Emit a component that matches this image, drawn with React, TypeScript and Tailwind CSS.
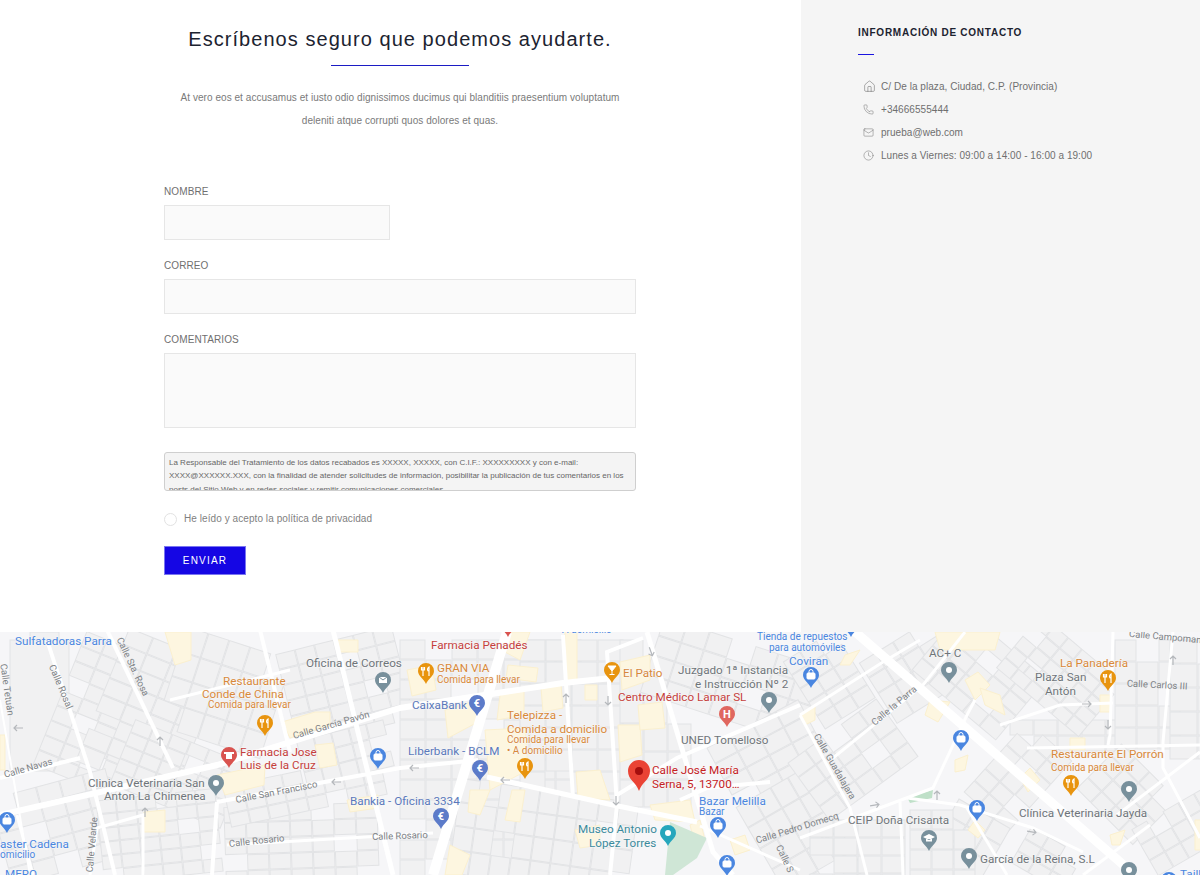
import { Clock, House, Mail, Phone } from "lucide-react";

// map data, coordinates are page pixels (svg viewBox starts at y=632)
const zones = [
  [0, 632, 60, 140, 0, 30, 140],
  [10, 640, 60, 130, 0, 60, 130],
  [60, 640, 70, 130, 22, 22, 16],
  [100, 640, 90, 140, 22, 26, 18],
  [170, 640, 100, 100, 18, 22, 26],
  [120, 740, 120, 60, 22, 20, 14],
  [0, 785, 100, 90, -15, 24, 18],
  [100, 795, 110, 80, -6, 20, 14],
  [225, 805, 150, 70, -2, 22, 16],
  [225, 770, 160, 35, -12, 20, 14],
  [285, 640, 110, 90, -14, 20, 16],
  [300, 730, 90, 40, -14, 18, 16],
  [400, 640, 160, 235, 0, 26, 20],
  [520, 640, 90, 160, 0, 26, 22],
  [455, 790, 170, 85, 8, 20, 24],
  [620, 640, 60, 160, 0, 24, 28],
  [650, 640, 160, 70, 18, 24, 20],
  [720, 720, 100, 80, -28, 26, 18],
  [740, 800, 120, 80, 60, 24, 20],
  [800, 640, 60, 80, -32, 20, 16],
  [800, 730, 90, 70, -36, 22, 18],
  [870, 640, 70, 60, -32, 20, 18],
  [930, 630, 90, 70, 40, 22, 16],
  [1010, 720, 110, 20, 0, 24, 16],
  [1010, 640, 100, 60, 40, 18, 14],
  [1115, 640, 60, 100, 0, 22, 22],
  [1170, 640, 30, 100, 0, 28, 24],
  [990, 730, 60, 90, 42, 20, 16],
  [940, 810, 60, 60, 30, 20, 20],
  [1090, 760, 70, 60, 45, 20, 16],
  [1160, 780, 40, 90, 60, 18, 18],
  [810, 820, 90, 60, 0, 24, 18],
  [910, 810, 50, 70, 0, 22, 20],
  [1020, 840, 60, 30, 30, 20, 14],
];

const beige = [
  "165,632 191,632 191,660 175,665",
  "337,640 358,640 358,652 337,652",
  "282,722 315,712 330,712 330,725 290,738",
  "315,745 333,743 337,765 320,768",
  "217,775 265,765 264,785 225,795",
  "144,812 165,810 165,832 144,832",
  "347,800 378,795 378,808 350,812",
  "0,735 5,735 5,770 0,770",
  "506,632 530,632 520,660 505,652",
  "508,665 538,668 536,682 506,678",
  "407,670 432,665 436,690 412,696",
  "445,710 478,700 478,722 448,738",
  "500,695 524,690 524,715 497,720",
  "485,730 525,728 528,770 490,790",
  "565,632 577,632 577,680 565,680",
  "541,688 561,684 563,708 543,712",
  "585,685 597,685 597,700 585,700",
  "576,772 600,770 610,800 578,798",
  "620,662 650,655 650,680 622,690",
  "618,725 640,725 642,755 620,762",
  "638,705 662,702 665,728 640,730",
  "512,790 525,790 520,822 505,820",
  "470,790 490,790 480,815 468,812",
  "650,805 690,800 695,822 655,820",
  "690,825 700,820 705,840 695,845",
  "730,840 745,835 750,850 735,855",
  "575,830 600,825 600,845 580,848",
  "450,845 470,855 462,875 445,875",
  "965,680 978,672 990,685 975,700",
  "980,688 1000,695 1005,715 985,705",
  "930,700 950,702 938,722 925,715",
  "1020,778 1030,768 1040,780 1028,792",
  "1070,738 1085,738 1085,750 1070,750",
  "1100,695 1110,695 1110,712 1100,712",
  "955,760 968,755 965,770 955,772",
  "1110,835 1125,830 1120,845 1112,845",
  "975,820 985,830 978,838 968,830",
  "935,632 1000,632 995,650 940,650",
  "800,715 815,705 815,720 805,725",
  "845,655 860,650 850,665 840,665",
  "1205,820 1195,820 1195,850 1205,850",
];

const roads: [string, number][] = [
  ["507,632 433,875", 10],
  ["853,630 1135,875", 9],
  ["0,815 217,765 400,708 563,683 612,678", 6],
  ["487,777 613,805 697,822", 5],
  ["47,640 90,772 115,875", 4],
  ["0,778 80,758", 4],
  ["107,630 173,768", 4],
  ["260,630 290,752", 4],
  ["333,630 393,875", 5],
  ["217,802 400,768 478,760", 4],
  ["227,845 400,835 433,833", 3],
  ["217,802 212,875", 4],
  ["90,875 97,828 143,815 143,875", 3],
  ["17,815 33,875", 3],
  ["170,700 290,670", 3],
  ["563,635 573,798", 4],
  ["643,638 607,652 617,805 610,875", 4],
  ["647,632 713,852 733,875", 5],
  ["800,705 677,758 617,795", 4],
  ["770,782 707,788 680,800", 4],
  ["800,715 883,662 920,640", 3],
  ["833,758 923,685 965,632", 3],
  ["1000,725 1060,705 1113,703", 3],
  ["1113,632 1110,735 1108,745", 3],
  ["1027,748 1200,745", 3],
  ["1173,632 1163,742 1163,768 1200,838", 3],
  ["1200,752 1117,815", 3],
  ["800,715 850,808 867,875", 3],
  ["800,838 933,788 967,715 975,700", 3],
  ["907,798 960,805 1033,828 1083,852", 3],
  ["967,808 1007,875", 3],
  ["900,802 903,875", 3],
  ["1083,875 1150,825", 3],
  ["700,826 800,870", 3],
  ["0,700 30,875", 2],
];

// one way arrows on the streets: x, y, rotation
const arrows = [
  [160, 741, 0],
  [145, 812, 0],
  [336, 782, -90],
  [566, 698, 0],
  [608, 701, 180],
  [505, 780, -90],
  [414, 768, -90],
  [616, 801, 180],
  [1087, 704, 90],
  [1108, 725, 180],
  [1173, 660, 0],
  [937, 795, 0],
  [875, 805, 80],
  [1032, 832, 100],
  [651, 652, 160],
  [18, 728, -90],
];

const BLUE = "#4a86e0";
const ORANGE = "#d8893a";
const RED = "#c5403c";
const GRAY = "#6f757a";
const INDIGO = "#5a78bb";
const TEAL = "#3b8a9c";

const labels: [string, number, number, string, number?][] = [
  ["Sulfatadoras Parra", 15, 645, BLUE],
  ["Restaurante", 223, 685, ORANGE],
  ["Conde de China", 202, 698, ORANGE],
  ["Comida para llevar", 208, 708, ORANGE, 10],
  ["Farmacia Jose", 240, 756, RED],
  ["Luis de la Cruz", 240, 769, RED],
  ["Clinica Veterinaria San", 88, 787, GRAY],
  ["Anton La Chimenea", 104, 800, GRAY],
  ["Oficina de Correos", 306, 667, GRAY],
  ["Bankia - Oficina 3334", 350, 805, INDIGO],
  ["aster Cadena", 0, 848, BLUE],
  ["omicilio", 0, 858, BLUE, 10],
  ["MERO", 5, 878, BLUE],
  ["Farmacia Penadés", 431, 649, RED],
  ["A domicilio", 562, 633, BLUE, 10],
  ["GRAN VIA", 437, 672, ORANGE],
  ["Comida para llevar", 437, 683, ORANGE, 10],
  ["CaixaBank", 412, 709, INDIGO],
  ["Telepizza -", 507, 719, ORANGE],
  ["Comida a domicilio", 507, 733, ORANGE],
  ["Comida para llevar", 507, 743, ORANGE, 10],
  ["• A domicilio", 507, 754, ORANGE, 10],
  ["Liberbank - BCLM", 408, 755, INDIGO],
  ["El Patio", 623, 677, ORANGE],
  ["Juzgado 1ª Instancia", 678, 674, GRAY],
  ["e Instrucción Nº 2", 695, 688, GRAY],
  ["Centro Médico Lamar SL", 618, 701, RED],
  ["UNED Tomelloso", 681, 744, GRAY],
  ["Calle José María", 652, 774, "#c5221f"],
  ["Serna, 5, 13700…", 652, 788, "#c5221f"],
  ["Bazar Melilla", 699, 805, BLUE],
  ["Bazar", 699, 815, BLUE, 10],
  ["Museo Antonio", 578, 833, TEAL],
  ["López Torres", 589, 847, TEAL],
  ["Tienda de repuestos", 757, 640, BLUE, 10],
  ["para automóviles", 769, 651, BLUE, 10],
  ["Coviran", 789, 665, BLUE],
  ["AC+ C", 929, 657, GRAY],
  ["La Panadería", 1060, 667, ORANGE],
  ["Plaza San", 1035, 681, GRAY],
  ["Antón", 1045, 695, GRAY],
  ["Restaurante El Porrón", 1051, 758, ORANGE],
  ["Comida para llevar", 1051, 771, ORANGE, 10],
  ["Clínica Veterinaria Jayda", 1019, 817, GRAY],
  ["CEIP Doña Crisanta", 848, 824, GRAY],
  ["García de la Reina, S.L", 980, 863, GRAY],
  ["Taill", 1180, 878, BLUE],
];

const streets: [string, number, number, number][] = [
  ["Calle Rosal", 58, 688, 67],
  ["Calle Sta. Rosa", 130, 668, 65],
  ["Calle Tetuán", 4, 690, 82],
  ["Calle Navas", 29, 771, -16],
  ["Calle García Pavón", 332, 728, -16],
  ["Calle San Francisco", 277, 795, -11],
  ["Calle Rosario", 257, 844, -6],
  ["Calle Rosario", 400, 839, -2],
  ["Calle Velarde", 95, 845, -85],
  ["Calle Pedro Domecq", 798, 831, -17],
  ["Calle S", 782, 860, 65],
  ["Calle la Parra", 896, 708, -40],
  ["Calle Guadalajara", 832, 768, 60],
  ["Calle Carlos III", 1157, 688, 3],
  ["Calle Campoman", 1165, 640, 5],
];

const pins: [number, number, string, string][] = [
  [508, 626, "#d9534f", ""],
  [851, 626, "#4a86e0", ""],
  [265, 725, "#e8940f", "food"],
  [229, 757, "#d9534f", "pharmacy"],
  [216, 785, "#78909c", "dot"],
  [383, 682, "#78909c", "mail"],
  [378, 758, "#4a86e0", "bag"],
  [7, 822, "#4a86e0", "bag"],
  [426, 673, "#e8940f", "food"],
  [477, 705, "#5c7bc9", "euro"],
  [525, 768, "#e8940f", "food"],
  [480, 770, "#5c7bc9", "euro"],
  [441, 818, "#5c7bc9", "euro"],
  [612, 672, "#e8940f", "glass"],
  [769, 702, "#78909c", "dot"],
  [727, 716, "#e0675f", "H"],
  [718, 827, "#4a86e0", "bag"],
  [668, 835, "#26a6bc", "dot"],
  [727, 865, "#4a86e0", "bag"],
  [811, 677, "#4a86e0", "bag"],
  [949, 672, "#78909c", "dot"],
  [1108, 680, "#e8940f", "food"],
  [961, 740, "#4a86e0", "bag"],
  [1071, 785, "#e8940f", "food"],
  [1129, 791, "#78909c", "dot"],
  [977, 810, "#4a86e0", "bag"],
  [929, 840, "#78909c", "cap"],
  [969, 858, "#78909c", "dot"],
  [1129, 872, "#78909c", "dot"],
  [1169, 882, "#4a86e0", "bag"],
];

function Buildings({ zone }: { zone: number[] }) {
  const [x, y, w, h, angle, cw, ch] = zone;
  const cells = [];
  for (let i = 0; i * cw < w; i++) {
    for (let j = 0; j * ch < h; j++) {
      const skip = (i * 7 + j * 13 + x) % 11 === 0;
      if (skip) continue;
      cells.push(<rect key={i + "-" + j} x={x + i * cw} y={y + j * ch} width={cw - 1} height={ch - 1} />);
    }
  }
  return (
    <g transform={`rotate(${angle} ${x + w / 2} ${y + h / 2})`} fill="#f1f1f2" stroke="#e2e3e5" strokeWidth="1">
      {cells}
    </g>
  );
}

function Pin({ x, y: my, color, icon }: { x: number; y: number; color: string; icon: string }) {
  // my is the middle of the pin, the head sits a bit above it
  const y = my - 2;
  return (
    <g>
      <path d={`M${x} ${y + 13} C${x - 2} ${y + 8} ${x - 8} ${y + 5} ${x - 8} ${y} A8 8 0 1 1 ${x + 8} ${y} C${x + 8} ${y + 5} ${x + 2} ${y + 8} ${x} ${y + 13}Z`} fill={color} />
      {icon === "dot" && <circle cx={x} cy={y} r="3" fill="#fff" />}
      {icon === "food" && (
        <path d={`M${x - 3} ${y - 4} V${y + 5} M${x - 4.5} ${y - 4} V${y - 1} H${x - 1.5} V${y - 4} M${x + 3} ${y + 5} V${y - 4} C${x + 1} ${y - 3} ${x + 1} ${y} ${x + 3} ${y}`} stroke="#fff" strokeWidth="1.2" fill="none" />
      )}
      {icon === "glass" && <path d={`M${x - 4} ${y - 4} H${x + 4} L${x} ${y + 1}Z M${x} ${y + 1} V${y + 4} M${x - 2.5} ${y + 4.5} H${x + 2.5}`} stroke="#fff" fill="#fff" strokeWidth="1" />}
      {icon === "cap" && <path d={`M${x} ${y - 4} L${x + 6} ${y - 1} L${x} ${y + 2} L${x - 6} ${y - 1}Z M${x - 3} ${y + 1} V${y + 3.5} H${x + 3} V${y + 1}`} fill="#fff" />}
      {icon === "bag" && (
        <g stroke="#fff" fill="none">
          <rect x={x - 4} y={y - 2} width="8" height="6" rx="1" fill="#fff" />
          <path d={`M${x - 2} ${y - 2} V${y - 3.5} A2 2 0 0 1 ${x + 2} ${y - 3.5} V${y - 2}`} strokeWidth="1" />
        </g>
      )}
      {icon === "mail" && (
        <g>
          <rect x={x - 4} y={y - 3} width="8" height="6" fill="#fff" />
          <path d={`M${x - 4} ${y - 3} L${x} ${y} L${x + 4} ${y - 3}`} stroke={color} fill="none" />
        </g>
      )}
      {icon === "pharmacy" && <path d={`M${x - 5} ${y - 3} H${x + 5} V${y - 1} H${x + 3} V${y + 4} H${x - 3} V${y - 1} H${x - 5}Z`} fill="#fff" />}
      {icon === "euro" && (
        <text x={x} y={y + 4} textAnchor="middle" fontSize="11" fontWeight="700" fill="#fff">
          €
        </text>
      )}
      {icon === "H" && (
        <text x={x} y={y + 4} textAnchor="middle" fontSize="11" fontWeight="700" fill="#fff">
          H
        </text>
      )}
    </g>
  );
}

function MapView() {
  return (
    <svg viewBox="0 632 1200 243" className="block w-full h-[243px] font-['Roboto',sans-serif]">
      <rect x="0" y="632" width="1200" height="243" fill="#f6f6f8" />
      {zones.map((z, i) => (
        <Buildings key={i} zone={z} />
      ))}
      {beige.map((p, i) => (
        <polygon key={i} points={p} fill="#fdf6e0" stroke="#fbf0cf" />
      ))}
      <polygon points="670,822 707,838 697,858 673,875 665,875" fill="#cfe6d6" />
      <polygon points="907,797 933,790 932,798 910,803" fill="#bfe0c8" />
      {roads.map(([pts, w], i) => (
        <polyline key={i} points={pts} fill="none" stroke="#fff" strokeWidth={w} />
      ))}
      {arrows.map(([x, y, a], i) => (
        <path key={i} d={`M${x} ${y + 5} V${y - 4} M${x - 3} ${y - 1} L${x} ${y - 4} L${x + 3} ${y - 1}`} transform={`rotate(${a} ${x} ${y})`} fill="none" stroke="#b5b8bc" strokeWidth="1.2" />
      ))}
      {streets.map(([t, x, y, a], i) => (
        <text key={i} x={x} y={y} fontSize="9.5" fill="#7d8286" textAnchor="middle" transform={`rotate(${a} ${x} ${y})`}>
          {t}
        </text>
      ))}
      {pins.map(([x, y, c, ic], i) => (
        <Pin key={i} x={x} y={y} color={c} icon={ic} />
      ))}
      {labels.map(([t, x, y, c, s], i) => (
        <text key={i} x={x} y={y} fontSize={s ?? 11.7} fill={c} stroke="#f8f8f8" strokeWidth="1" paintOrder="stroke">
          {t}
        </text>
      ))}
      <path d="M639 791 C636 782 628 780 628 771 A11 11 0 1 1 650 771 C650 780 642 782 639 791Z" fill="#ea4335" />
      <circle cx="639" cy="771" r="4" fill="#a50e0e" />
    </svg>
  );
}

const contact = [
  { icon: House, text: "C/ De la plaza, Ciudad, C.P. (Provincia)", size: 13 },
  { icon: Phone, text: "+34666555444", size: 11 },
  { icon: Mail, text: "prueba@web.com", size: 11 },
  { icon: Clock, text: "Lunes a Viernes: 09:00 a 14:00 - 16:00 a 19:00", size: 11 },
];

export default function App() {
  return (
    <div className="w-full bg-white font-['Liberation_Sans',Arial,sans-serif]">
      <div className="flex h-[632px]">
        <div className="w-[801px] pr-px flex justify-center">
          <div className="w-[472px]">
            <h1 className="pt-[26px] text-center text-[20px] leading-[27px] tracking-[1.05px] text-[#1c2330] whitespace-nowrap">
              Escríbenos seguro que podemos ayudarte.
            </h1>
            <div className="w-[138px] h-px bg-[#1c1cc4] mx-auto mt-[12px]"></div>
            <p className="mt-[20px] text-center text-[10px] leading-[23px] tracking-[0.05px] text-[#7a7a7a] whitespace-nowrap">
              At vero eos et accusamus et iusto odio dignissimos ducimus qui blanditiis praesentium voluptatum
              <br />
              deleniti atque corrupti quos dolores et quas.
            </p>
            <form className="mt-[53px]">
              <label className="block text-[10px] leading-[14px] tracking-[0.1px] text-[#6f6f6f]">NOMBRE</label>
              <input className="block mt-[6px] w-[226px] h-[35px] bg-[#fafafa] border border-[#e6e6e6]" />
              <label className="block mt-[19px] text-[10px] leading-[14px] tracking-[0.1px] text-[#6f6f6f]">CORREO</label>
              <input className="block mt-[6px] w-full h-[35px] bg-[#fafafa] border border-[#e6e6e6]" />
              <label className="block mt-[19px] text-[10px] leading-[14px] tracking-[0.1px] text-[#6f6f6f]">COMENTARIOS</label>
              <textarea className="block mt-[6px] w-full h-[75px] bg-[#fafafa] border border-[#e6e6e6] resize-none"></textarea>
              <div className="mt-[24px] h-[39px] overflow-hidden rounded-[3px] border border-[#cfcfcf] bg-[#f4f4f4] px-[4px] pt-[3px] text-[8px] leading-[13.4px] text-[#666]">
                La Responsable del Tratamiento de los datos recabados es XXXXX, XXXXX, con C.I.F.: XXXXXXXXX y con e-mail: XXXX@XXXXXX.XXX, con la finalidad de atender solicitudes de información, posibilitar la publicación de tus comentarios en los posts del Sitio Web y en redes sociales y remitir comunicaciones comerciales.
              </div>
              <div className="mt-[20px] flex items-center gap-[7px]">
                <span className="w-[13px] h-[13px] rounded-full border border-[#e2e2e2] bg-white"></span>
                <span className="text-[10px] leading-[16px] tracking-[0.07px] text-[#7f7f7f]">He leído y acepto la política de privacidad</span>
              </div>
              <button type="button" className="mt-[19px] block w-[82px] h-[29px] bg-[#1506e4] border border-[#7a76f0] text-white text-[10px] tracking-[1.2px]">
                ENVIAR
              </button>
            </form>
          </div>
        </div>
        <aside className="flex-1 bg-[#f5f5f5] pl-[57px] pt-[27px]">
          <h2 className="text-[10px] leading-[12px] font-bold tracking-[0.75px] text-[#1c2330]">INFORMACIÓN DE CONTACTO</h2>
          <div className="w-[16px] h-px bg-[#1a14e0] mt-[15px]"></div>
          <ul className="mt-[20px] pl-[5px]">
            {contact.map((c) => (
              <li key={c.text} className="flex items-center h-[23px] text-[10px] tracking-[0.05px] text-[#6f6f6f] whitespace-nowrap">
                <span className="w-[18px] flex items-center">
                  <c.icon size={c.size} strokeWidth={1} className="text-[#666]" />
                </span>
                {c.text}
              </li>
            ))}
          </ul>
        </aside>
      </div>
      <MapView />
    </div>
  );
}
